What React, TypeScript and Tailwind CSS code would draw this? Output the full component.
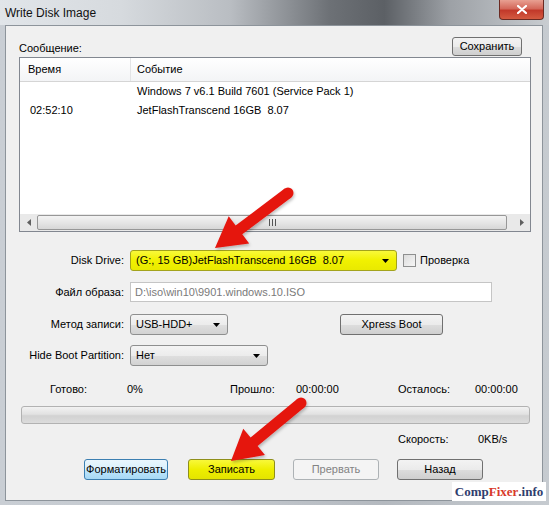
import React from 'react'

type Pt = [number, number]

// polygon for a fat arrow running from tail to tip
function arrowShape(tail: Pt, tip: Pt, headLen = 30, headHalf = 17, shaftHalf = 5.5) {
	const dx = tip[0] - tail[0]
	const dy = tip[1] - tail[1]
	const len = Math.hypot(dx, dy)
	const ux = dx / len
	const uy = dy / len
	const nx = -uy
	const ny = ux
	const bx = tip[0] - ux * headLen
	const by = tip[1] - uy * headLen
	const pts: Pt[] = [
		[tail[0] + nx * shaftHalf, tail[1] + ny * shaftHalf],
		[bx + nx * shaftHalf, by + ny * shaftHalf],
		[bx + nx * headHalf, by + ny * headHalf],
		tip,
		[bx - nx * headHalf, by - ny * headHalf],
		[bx - nx * shaftHalf, by - ny * shaftHalf],
		[tail[0] - nx * shaftHalf, tail[1] - ny * shaftHalf],
	]
	return pts.map((p) => p.join(',')).join(' ')
}

function Arrow({ tail, tip }: { tail: Pt; tip: Pt }) {
	return (
		<g filter="url(#arrowShadow)">
			<polygon fill="#e5140e" points={arrowShape(tail, tip)} />
			<circle cx={tail[0]} cy={tail[1]} fill="#e5140e" r={5.5} />
		</g>
	)
}

function DropTriangle() {
	return (
		<svg height="4" viewBox="0 0 7 4" width="7">
			<path d="M0 0H7L3.5 4Z" fill="#000" />
		</svg>
	)
}

function Combo({ value, className, yellow }: { value: string; className: string; yellow?: boolean }) {
	return (
		<div
			className={`flex h-[21px] items-center justify-between rounded-[3px] border pl-[5px] pr-[7px] ${className} ${
				yellow
					? 'border-[#a3a31c] bg-[linear-gradient(#f9f93a_0%,#f1f100_50%,#e9e900_100%)]'
					: 'border-[#8e8f8f] bg-[linear-gradient(#f4f4f4_0%,#ececec_50%,#dfdfdf_51%,#d2d2d2_100%)]'
			}`}
		>
			<span className="whitespace-pre">{value}</span>
			<DropTriangle />
		</div>
	)
}

function Btn({ children, className, kind }: { children: React.ReactNode; className: string; kind?: 'focus' | 'yellow' | 'off' }) {
	let look = 'border-[#707070] bg-[linear-gradient(#f3f3f3_0%,#ebebeb_50%,#dddddd_51%,#cfcfcf_100%)] text-black'
	if (kind === 'focus') look = 'border-[#3c7fb1] bg-[linear-gradient(#eaf6fd_0%,#d9f0fc_50%,#bee6fd_51%,#a7d9f5_100%)] text-black'
	if (kind === 'yellow') look = 'border-[#8f8f1a] bg-[linear-gradient(#f8f83a_0%,#eeee00_50%,#e4e400_100%)] text-black'
	if (kind === 'off') look = 'border-[#adb2b5] bg-[#f4f4f4] text-[#838383]'
	return <div className={`flex items-center justify-center rounded-[3px] border ${look} ${className}`}>{children}</div>
}

function Label({ children }: { children: React.ReactNode }) {
	return <div className="w-[118px] text-right">{children}</div>
}

export default function App() {
	return (
		<div className="relative h-[505px] w-[549px] overflow-hidden bg-[linear-gradient(90deg,#c9ced4_0%,#c3c8ce_40%,#b4b9bf_70%,#c6cbd0_100%)] font-['Liberation_Sans',Tahoma,sans-serif]">
			{/* title bar */}
			<div className="flex h-[25px] items-start bg-[linear-gradient(90deg,#e1e5e9_0%,#d6dade_22%,#b9bdc2_42%,#6d7176_60%,#5c6065_70%,#9da1a6_82%,#c9cdd1_100%)]">
				<div className="mt-[4px] pl-[5px] text-[12px] text-[#111]">Write Disk Image</div>
				<div className="ml-auto mr-[5px] flex h-[20px] w-[45px] items-center justify-center rounded-b-[4px] border border-t-0 border-[#6b2a22] bg-[linear-gradient(#e8a092_0%,#d4685a_45%,#c2392a_55%,#d45a40_100%)]">
					<svg height="9" viewBox="0 0 10 9" width="10">
						<path d="M1 1L9 8M9 1L1 8" stroke="#fff" strokeLinecap="round" strokeWidth="2.2" />
					</svg>
				</div>
			</div>

			{/* window client area */}
			<div className="ml-[5px] h-[476px] w-[538px] border border-[#8d949b] bg-[#f0f0f0] text-[11px] text-black">
				<div className="mt-[11px] flex h-[19px] items-center pl-[13px] pr-[20px]">
					<span className="mt-[3px]">Сообщение:</span>
					<Btn className="ml-auto h-[19px] w-[70px]">Сохранить</Btn>
				</div>

				{/* log list */}
				<div className="ml-[13px] mt-[1px] flex h-[175px] w-[512px] flex-col border border-[#828790] bg-white">
					<div className="flex h-[24px] shrink-0 border-b border-[#d5d5d5] bg-[linear-gradient(#ffffff,#f3f4f6)]">
						<div className="flex w-[111px] items-center border-r border-[#e3e4e6] pl-[8px]">Время</div>
						<div className="flex items-center pl-[6px]">Событие</div>
					</div>
					<div className="flex h-[19px] items-center">
						<div className="w-[111px]" />
						<div className="pl-[6px]">Windows 7 v6.1 Build 7601 (Service Pack 1)</div>
					</div>
					<div className="flex h-[19px] items-center">
						<div className="w-[111px] pl-[10px]">02:52:10</div>
						<div className="whitespace-pre pl-[6px]">JetFlashTranscend 16GB  8.07</div>
					</div>
					<div className="flex-1" />
					<div className="flex h-[17px] shrink-0 items-center bg-[#e9e9e9]">
						<div className="flex h-full w-[17px] items-center justify-center">
							<svg height="7" viewBox="0 0 4 7" width="4">
								<path d="M4 0V7L0 3.5Z" fill="#606060" />
							</svg>
						</div>
						<div className="flex h-[15px] w-[470px] items-center justify-center rounded-[2px] border border-[#979797] bg-[linear-gradient(#f3f3f3_0%,#e6e6e6_50%,#d7d7d7_100%)]">
							<div className="flex gap-[2px]">
								<div className="h-[7px] w-px bg-[#555]" />
								<div className="h-[7px] w-px bg-[#555]" />
								<div className="h-[7px] w-px bg-[#555]" />
							</div>
						</div>
						<div className="flex-1" />
						<div className="flex h-full w-[17px] items-center justify-center">
							<svg height="7" viewBox="0 0 4 7" width="4">
								<path d="M0 0V7L4 3.5Z" fill="#606060" />
							</svg>
						</div>
					</div>
				</div>

				{/* settings */}
				<div className="mt-[18px] flex h-[21px] items-center">
					<Label>Disk Drive:</Label>
					<Combo className="ml-[6px] w-[267px]" value="(G:, 15 GB)JetFlashTranscend 16GB  8.07" yellow />
					<div className="ml-[6px] h-[13px] w-[13px] border border-[#8e8f8f] bg-[linear-gradient(135deg,#dcdcdc,#f6f6f6)]" />
					<span className="ml-[4px]">Проверка</span>
				</div>
				<div className="mt-[11px] flex h-[20px] items-center">
					<Label>Файл образа:</Label>
					<div className="ml-[6px] flex h-[20px] w-[362px] items-center border border-[#c5c5c5] bg-white pl-[4px] text-[#7a7a7a]">
						D:\iso\win10\9901.windows.10.ISO
					</div>
				</div>
				<div className="mt-[12px] flex h-[21px] items-center">
					<Label>Метод записи:</Label>
					<Combo className="ml-[6px] w-[98px]" value="USB-HDD+" />
					<Btn className="ml-[112px] h-[21px] w-[103px]">Xpress Boot</Btn>
				</div>
				<div className="mt-[10px] flex h-[21px] items-center">
					<Label>Hide Boot Partition:</Label>
					<Combo className="ml-[6px] w-[138px]" value="Нет" />
				</div>

				{/* progress */}
				<div className="mt-[16px] flex h-[14px] items-center pl-[44px]">
					<span className="w-[77px]">Готово:</span>
					<span className="w-[103px]">0%</span>
					<span className="w-[66px]">Прошло:</span>
					<span className="w-[102px]">00:00:00</span>
					<span className="w-[77px]">Осталось:</span>
					<span>00:00:00</span>
				</div>
				<div className="ml-[15px] mt-[10px] h-[18px] w-[509px] rounded-[3px] border border-[#b2b2b2] bg-[linear-gradient(#f2f2f2_0%,#e2e2e2_45%,#d2d2d2_55%,#dcdcdc_100%)]" />
				<div className="mt-[8px] flex h-[14px] items-center pl-[392px]">
					<span className="w-[80px]">Скорость:</span>
					<span>0KB/s</span>
				</div>

				<div className="mt-[13px] flex h-[21px] items-center pl-[78px]">
					<Btn className="h-[21px] w-[84px]" kind="focus">
						Форматировать
					</Btn>
					<Btn className="ml-[20px] h-[21px] w-[87px]" kind="yellow">
						Записать
					</Btn>
					<Btn className="ml-[18px] h-[21px] w-[86px]" kind="off">
						Прервать
					</Btn>
					<Btn className="ml-[18px] h-[21px] w-[86px]">Назад</Btn>
				</div>
			</div>

			{/* site stamp */}
			<div className="absolute bottom-[4px] right-[3px] flex h-[19px] w-[94px] items-center justify-center bg-white font-['Liberation_Serif',serif] text-[13px] font-bold">
				<span className="text-[#2f3e6e]">Comp</span>
				<span className="text-[#d8392b]">Fixer</span>
				<span className="text-[#2f3e6e]">.info</span>
			</div>

			{/* red pointers */}
			<svg className="pointer-events-none absolute left-0 top-0" height="505" width="549">
				<defs>
					<filter id="arrowShadow" x="-20%" y="-20%" width="140%" height="140%">
						<feDropShadow dx="1" dy="2" floodColor="#000" floodOpacity="0.25" stdDeviation="1.5" />
					</filter>
				</defs>
				<Arrow tail={[288, 193]} tip={[215, 248]} />
				<Arrow tail={[301, 403]} tip={[231, 461]} />
			</svg>
		</div>
	)
}
